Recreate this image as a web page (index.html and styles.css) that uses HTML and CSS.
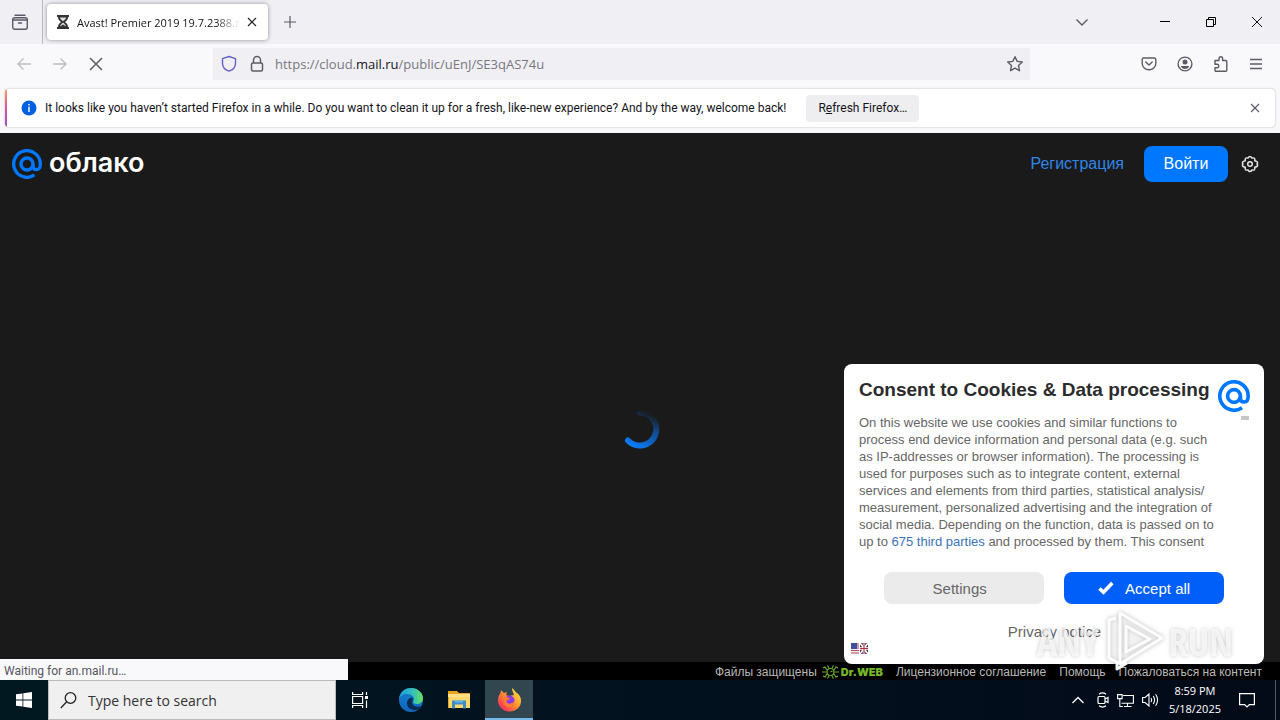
FILE: index.html
```html
<!DOCTYPE html>
<html lang="en">
<head>
<meta charset="utf-8">
<title>Avast! Premier 2019 19.7.2388.zip</title>
<link rel="stylesheet" href="styles.css">
</head>
<body>
<svg class="defs" aria-hidden="true">
  <symbol id="at" viewBox="0 0 32 32">
    <g fill="none" stroke="#07f" stroke-width="3.6">
      <circle cx="16" cy="16" r="6.4"/>
      <path d="M22.4 16v2.2c0 2.3 1.500 3.800 3.700 3.800s4.100-1.800 4.100-6A14.200 14.200 0 1 0 24 27.700"/>
    </g>
  </symbol>
</svg>

<header class="tabs">
  <button class="icon-btn recent" aria-label="Recent browsing">
    <svg width="18" height="18" viewBox="0 0 18 18" fill="none" stroke="#5b5b66" stroke-width="1.4" stroke-linecap="round"><path d="M4 2.200h10"/><rect x="1.700" y="4.700" width="14.600" height="11.600" rx="2"/><path d="M2 7h14M7.500 10h3"/></svg>
  </button>
  <div class="tab">
    <svg width="14" height="16" viewBox="0 0 14 16"><path d="M1 1h12v2h-1c0 3-2 4-3 5 1 1 3 2 3 5h1v2H1v-2h1c0-3 2-4 3-5-1-1-3-2-3-5H1z" fill="#333"/><path d="M4 3.500h6c0 2-2 3-3 3.700C6 6.500 4 5.500 4 3.500zM4 12.500c0-1.500 2-3 3-4 1 1 3 2.500 3 4L7 10.500z" fill="#ddd"/></svg>
    <span class="tab-title">Avast! Premier 2019 19.7.2388.zip</span>
    <button class="icon-btn" aria-label="Close tab"><svg width="10" height="10" viewBox="0 0 10 10" stroke="#222" stroke-width="1.200"><path d="M1 1l8 8M9 1L1 9"/></svg></button>
  </div>
  <button class="icon-btn new-tab" aria-label="New tab"><svg width="12" height="12" viewBox="0 0 12 12" stroke="#5b5b66" stroke-width="1.200"><path d="M6 0v12M0 6h12"/></svg></button>
  <div class="window-controls">
    <button class="icon-btn all-tabs" aria-label="List all tabs"><svg width="14" height="14" viewBox="0 0 14 14" fill="none" stroke="#5b5b66" stroke-width="1.400"><path d="M1.500 4.500L7 10l5.500-5.500"/></svg></button>
    <button class="icon-btn" aria-label="Minimize"><svg width="10" height="10" viewBox="0 0 10 10" stroke="#000"><path d="M0 4.500h10"/></svg></button>
    <button class="icon-btn" aria-label="Restore"><svg width="10" height="10" viewBox="0 0 10 10" fill="none" stroke="#000"><path d="M.5 2.500h7v7h-7zM2.500 2.500v-2h7v7h-2"/></svg></button>
    <button class="icon-btn" aria-label="Close"><svg width="10" height="10" viewBox="0 0 10 10" stroke="#111"><path d="M0 0l10 10M10 0L0 10"/></svg></button>
  </div>
</header>

<nav class="toolbar">
  <div class="nav-buttons">
    <button class="icon-btn" aria-label="Back" disabled><svg width="16" height="16" viewBox="0 0 16 16" fill="none" stroke="#bdbdc2" stroke-width="1.400"><path d="M15 8H2M7.500 2.500L2 8l5.500 5.500"/></svg></button>
    <button class="icon-btn" aria-label="Forward" disabled><svg width="16" height="16" viewBox="0 0 16 16" fill="none" stroke="#bdbdc2" stroke-width="1.400"><path d="M1 8h13M8.500 2.500L14 8l-5.500 5.500"/></svg></button>
    <button class="icon-btn" aria-label="Stop"><svg width="16" height="16" viewBox="0 0 16 16" stroke="#5b5b66" stroke-width="1.500"><path d="M2 2l12 12M14 2L2 14"/></svg></button>
  </div>
  <div class="urlbar">
    <svg width="16" height="18" viewBox="0 0 16 18" fill="none" stroke="#6a5fc9" stroke-width="1.400"><path d="M8 1.500L1.500 3.700v4.500c0 4 3 6.800 6.500 8 3.500-1.200 6.500-4 6.500-8V3.700z" stroke-linejoin="round"/></svg>
    <svg width="14" height="18" viewBox="0 0 14 18" fill="none" stroke="#5b5b66" stroke-width="1.500"><rect x="1.500" y="8" width="11" height="8" rx="1.500"/><path d="M3.500 8V5a3.500 3.500 0 0 1 7 0v3"/></svg>
    <span class="url" role="textbox" aria-label="Address">https://cloud.<b>mail.ru</b>/public/uEnJ/SE3qAS74u</span>
    <button class="icon-btn" aria-label="Bookmark this page"><svg width="18" height="18" viewBox="0 0 18 18" fill="none" stroke="#5b5b66" stroke-width="1.400" stroke-linejoin="round"><path d="M9 1.700l2.200 4.700 5.100.6-3.800 3.500 1 5.200L9 13.200l-4.500 2.500 1-5.200L1.700 7l5.100-.6z"/></svg></button>
  </div>
  <div class="tools">
    <button class="icon-btn" aria-label="Save to Pocket"><svg width="16" height="16" viewBox="0 0 16 16" fill="none" stroke="#5b5b66" stroke-width="1.400" stroke-linecap="round" stroke-linejoin="round"><path d="M2.500 2h11a1.300 1.300 0 0 1 1.300 1.300V7.500a6.800 6.300 0 0 1-13.600 0V3.300A1.300 1.300 0 0 1 2.500 2zM4.800 6L8 9l3.200-3"/></svg></button>
    <button class="icon-btn" aria-label="Account"><svg width="16" height="16" viewBox="0 0 16 16"><circle cx="8" cy="8" r="6.900" fill="none" stroke="#5b5b66" stroke-width="1.400"/><circle cx="8" cy="6" r="2.500" fill="#5b5b66"/><path d="M3.800 10h8.400c-.5 1.900-2.100 3-4.200 3s-3.700-1.100-4.200-3z" fill="#5b5b66"/></svg></button>
    <button class="icon-btn" aria-label="Extensions"><svg width="16" height="18" viewBox="0 0 16 18" fill="none" stroke="#5b5b66" stroke-width="1.400" stroke-linejoin="round"><path d="M2 5.500h4V3.500a1.800 1.800 0 0 1 3.600 0v2h3.200a1 1 0 0 1 1 1v8.800a1 1 0 0 1-1 1H3a1 1 0 0 1-1-1v-2.500h2a1.800 1.800 0 0 0 0-3.600H2z"/></svg></button>
    <button class="icon-btn" aria-label="Open menu"><svg width="14" height="14" viewBox="0 0 14 14" stroke="#5b5b66" stroke-width="1.300"><path d="M1 2.500h12M1 7h12M1 11.500h12"/></svg></button>
  </div>
</nav>

<div class="notice-wrap">
  <div class="notice" role="status">
    <svg width="16" height="16" viewBox="0 0 16 16"><circle cx="8" cy="8" r="7.500" fill="#0060df"/><path d="M7.300 4h1.400v1.500H7.300zM7.300 6.800h1.400V12H7.300z" fill="#fff"/></svg>
    <span class="notice-text">It looks like you haven’t started Firefox in a while. Do you want to clean it up for a fresh, like-new experience? And by the way, welcome back!</span>
    <button class="refresh">R<u>e</u>fresh Firefox…</button>
    <button class="icon-btn notice-close" aria-label="Dismiss"><svg width="10" height="10" viewBox="0 0 10 10" stroke="#5b5b66" stroke-width="1.100"><path d="M1 1l8 8M9 1L1 9"/></svg></button>
  </div>
</div>

<div class="page">
  <header class="site-header">
    <a class="logo" href="#"><svg width="30" height="30"><use href="#at"/></svg><span>облако</span></a>
    <a class="register" href="#">Регистрация</a>
    <button class="login">Войти</button>
    <button class="icon-btn" aria-label="Настройки"><svg width="18" height="18" viewBox="0 0 18 18" fill="none" stroke="#e6e6e6" stroke-width="1.500" stroke-linejoin="round"><path d="M7 3Q9-.2 11 3q3.500-.7 2.700 2.700Q18 7 16 9q2 2.300-2.300 3.300.8 3.400-2.700 2.700-2 3.200-4 0-3.500.7-2.700-2.700Q0 11.300 2 9q-2-2 2.300-3.300Q3.500 2.300 7 3z"/><circle cx="9" cy="9" r="2.300"/></svg></button>
  </header>
  <main class="loading">
    <svg width="44" height="44" viewBox="0 0 44 44"><defs><linearGradient id="fade" x1=".6" y1="0" x2=".2" y2="1"><stop offset="0" stop-color="#0c62c8" stop-opacity=".05"/><stop offset=".4" stop-color="#0c62c8" stop-opacity=".7"/><stop offset="1" stop-color="#0c7af5"/></linearGradient></defs><path d="M22 5.500a16.500 16.500 0 1 1-12 28" fill="none" stroke="url(#fade)" stroke-width="6" stroke-linecap="round"/></svg>
  </main>
  <footer class="site-footer">
    <span class="protected">Файлы защищены
      <svg width="17" height="14" viewBox="0 0 17 14" fill="none" stroke="#6bae2c" stroke-width="1.200"><circle cx="8.500" cy="7" r="3.500"/><path d="M8.500 7l2-1M5 5L3 2 1 3M4.500 7H0M5 9l-2 3-2-1M12 5l2-3 2 1M12.500 7H17M12 9l2 3 2-1M7 3L5.500.5M10 3l1.500-2.500M7 11l-1.500 2.500M10 11l1.500 2.500"/></svg>
      <b>Dr.WEB</b></span>
    <a href="#">Лицензионное соглашение</a>
    <a href="#">Помощь</a>
    <a href="#">Пожаловаться на контент</a>
  </footer>

  <section class="consent" role="dialog" aria-labelledby="consent-title">
    <div class="consent-head">
      <h1 id="consent-title">Consent to Cookies &amp; Data processing</h1>
      <svg width="32" height="32"><use href="#at"/></svg>
    </div>
    <div class="consent-body">
      <p>On this website we use cookies and similar functions to<br>process end device information and personal data (e.g. such<br>as IP-addresses or browser information). The processing is<br>used for purposes such as to integrate content, external<br>services and elements from third parties, statistical analysis/<br>measurement, personalized advertising and the integration of<br>social media. Depending on the function, data is passed on to<br>up to <a href="#">675 third parties</a> and processed by them. This consent</p>
      <span class="scroll-thumb"></span>
    </div>
    <div class="consent-actions">
      <button class="settings">Settings</button>
      <button class="accept"><svg width="16" height="14" viewBox="0 0 16 14" fill="none" stroke="#fff" stroke-width="3.600"><path d="M1.500 7.500L5.500 11.300 14.300 2"/></svg>Accept all</button>
    </div>
    <a class="privacy" href="#">Privacy notice</a>
    <button class="icon-btn language" aria-label="Language"><svg width="17" height="11" viewBox="0 0 17 11"><path d="M0 0h8v11H0z" fill="#eee"/><path d="M0 0h6v6H0z" fill="#3c4f9c"/><path d="M6 1h2M6 3h2M6 5h2M0 7.500h8M0 10h8" stroke="#b44a5c" stroke-width="1.200"/><path d="M9 0h8v11H9z" fill="#35335f"/><path d="M9 0l8 11M17 0L9 11" stroke="#fff" stroke-width="1.500"/><path d="M13 0v11M9 5.500h8" stroke="#fff" stroke-width="2.500"/><path d="M13 0v11M9 5.500h8" stroke="#b93045" stroke-width="1.200"/></svg></button>
  </section>

  <div class="watermark"><span>ANY</span><svg width="60" height="62" viewBox="0 0 60 62" fill="rgba(255,255,255,.2)" stroke="rgba(255,255,255,.95)" stroke-width="3" stroke-linejoin="round"><path d="M16 3l42 25-42 26zM12 8L5 10v38l8 4v7l10-6M22 16l24 13-24 13z"/></svg><span>RUN</span></div>
  <div class="status">Waiting for an.mail.ru…</div>
</div>

<footer class="taskbar">
  <button class="task start" aria-label="Start"><svg width="16" height="16" viewBox="0 0 16 16" fill="#fff"><path d="M0 2.300L6.500 1.400v6.200H0zM7.300 1.300L16 0v7.600H7.300zM0 8.400h6.500v6.200L0 13.700zM7.300 8.400H16V16l-8.700-1.300z"/></svg></button>
  <label class="search"><svg width="17" height="17" viewBox="0 0 17 17" fill="none" stroke="#222" stroke-width="1.300"><circle cx="10.500" cy="6" r="5.300"/><path d="M6.700 9.800L.8 16"/></svg><input type="text" placeholder="Type here to search" aria-label="Search"></label>
  <button class="task view" aria-label="Task view"><svg width="16" height="16" viewBox="0 0 16 16" fill="none" stroke="#fff" stroke-width="1.200"><path d="M.6 0v2.500h10V0M.6 16v-2.500h10V16M.6 4.500h10v7H.6zM14.500 0v3M14.500 8.500V16"/><path d="M13 4h3v3h-3z" fill="#fff" stroke="none"/></svg></button>
  <button class="task edge" aria-label="Microsoft Edge"><svg width="26" height="26" viewBox="0 0 26 26"><defs><linearGradient id="e1" x1="0" x2="1"><stop stop-color="#1b9de2"/><stop offset=".6" stop-color="#35c1b5"/><stop offset="1" stop-color="#6ae05a"/></linearGradient><linearGradient id="e2" y1="0" y2="1" x2="0"><stop stop-color="#1480cf"/><stop offset="1" stop-color="#1167bd"/></linearGradient></defs><circle cx="13" cy="13" r="12" fill="url(#e2)"/><path d="M1 12C2 4 8 1 13 1c7 0 12 5 12 10 0 4-3 6-6 6-2.500 0-4-1-4-2 0-.7 1-1 1-3 0-2.500-3-5-7-5-4 0-7 2-8 5z" fill="url(#e1)"/><path d="M15 11c-2-1-6 1-6 5 0 5 4 7 8 7 2.500 0 5-1.500 6-4-5 2-10-1-8.500-5z" fill="#0b2b55"/></svg></button>
  <button class="task" aria-label="File Explorer"><svg width="22" height="20" viewBox="0 0 22 20"><path d="M0 1h9l2 2h11v15H0z" fill="#e9a51f"/><path d="M1 4h21v14H1z" fill="#ffd86b"/><path d="M0 4h22v3H0z" fill="#ffe08a"/><path d="M4 18.500v-8h14v8h-3v-4H7v4z" fill="#3e8ec4"/><path d="M7 10.500h8v2H7z" fill="#65b8e8"/></svg></button>
  <button class="task active" aria-label="Firefox"><svg width="25" height="25" viewBox="0 0 25 25"><defs><linearGradient id="f1" x1="1" x2="0" y1="0" y2="1"><stop stop-color="#fff04a"/><stop offset=".45" stop-color="#ff9a2d"/><stop offset=".8" stop-color="#ff3f52"/><stop offset="1" stop-color="#e7298a"/></linearGradient></defs><path d="M15 1c3 2 3 4 5 5 3 2 4 5 4 8 0 6-5 10.500-11.500 10.500S1 19.500 1 13.500C1 10 2 8 3.500 6L4 3l3 3 3-1-1 3 3 1 5-1c-1-3-2-4-2-7z" fill="url(#f1)"/><circle cx="12.500" cy="13.500" r="5" fill="#8a3be2"/><path d="M7 10c3-1 4 1 6 1-1 2-3 2-3.500 3 0 3 5 4 7.500 0-.5 5-3 6-5 6-4 0-6-4-5-10z" fill="#ff7b32"/></svg></button>
  <div class="tray">
    <svg class="chevron" width="12" height="12" viewBox="0 0 12 12" fill="none" stroke="#fff" stroke-width="1.300"><path d="M.5 9L6 3.500 11.500 9"/></svg>
    <svg width="12" height="16" viewBox="0 0 12 16" fill="none" stroke="#fff" stroke-width="1.200"><rect x="1" y="4.500" width="7" height="7" rx="1"/><path d="M8 7l3-1.500v5L8 9M2 2.200Q5.500-.3 9 2.200M2 13.800q3.500 2.500 7 0"/></svg>
    <svg width="17" height="15" viewBox="0 0 17 15" fill="none" stroke="#fff" stroke-width="1.100"><path d="M6 2.500h10.400v7.800H4.500M10.500 10.500v3M7 13.500h7.500M.6 1.600h4.500v4H.6zM2.800 5.600v7.900h3"/></svg>
    <svg width="17" height="16" viewBox="0 0 17 16" fill="none" stroke="#fff" stroke-width="1.100"><path d="M.6 5.500h2.500L7 2v12L3.100 10.500H.6zM9 6q1.200 2 0 4M11.300 4q2.500 4 0 8M13.600 2.300q4 5.700 0 11.400"/></svg>
    <time class="clock">8:59 PM<br>5/18/2025</time>
    <svg class="action-center" width="16" height="17" viewBox="0 0 16 17" fill="none" stroke="#fff" stroke-width="1.200"><path d="M.6 1.600h14.800v11h-5L8 15l-2.400-2.400h-5z"/></svg>
  </div>
</footer>
</body>
</html>
```
FILE: styles.css
```css
* { box-sizing: border-box; }
body {
  margin: 0;
  min-height: 100vh;
  display: flex;
  flex-direction: column;
  background: #f9f9fb;
  font-family: "Open Sans", "Noto Sans", sans-serif;
  font-size: 12px;
  color: #15141a;
}
svg { flex: none; display: block; }
button, input { font: inherit; color: inherit; }
button { border: 0; padding: 0; background: none; }
a { text-decoration: none; }
.defs { position: absolute; width: 0; height: 0; }
.icon-btn { display: inline-flex; align-items: center; justify-content: center; flex: none; }

.tabs { display: flex; align-items: center; height: 44px; background: #f0eff4; }
.recent { width: 43px; height: 44px; padding-right: 2px; border-right: 1px solid #b9b9c0; }
.tab {
  display: flex;
  align-items: center;
  gap: 7px;
  width: 221px;
  height: 36px;
  margin-left: 4px;
  padding: 0 11px 0 9px;
  border-radius: 4px;
  background: #fff;
  box-shadow: 0 0 4px rgba(0, 0, 0, .4);
  font-size: 11px;
}
.tab-title {
  flex: 1;
  min-width: 0;
  overflow: hidden;
  white-space: nowrap;
  -webkit-mask-image: linear-gradient(to right, #000 85%, transparent);
  mask-image: linear-gradient(to right, #000 85%, transparent);
}
.new-tab { margin-left: 16px; }
.window-controls { display: flex; align-items: center; margin-left: auto; padding-right: 18px; gap: 36px; }
.all-tabs { margin-right: 35px; }

.toolbar { display: flex; align-items: center; height: 40px; padding: 0 17px 0 16px; }
.nav-buttons { display: flex; gap: 20px; width: 197px; }
.urlbar {
  display: flex;
  align-items: center;
  gap: 13px;
  flex: 1;
  max-width: 817px;
  height: 32px;
  padding: 0 6px 0 8px;
  background: #f0f0f4;
}
.url { flex: 1; margin-left: -2px; font-size: 13px; color: #77777f; }
.url b { font-weight: 400; color: #15141a; }
.tools { display: flex; align-items: center; gap: 20px; margin-left: auto; }

.notice-wrap { padding: 5px 5px 6px; }
.notice {
  display: flex;
  align-items: center;
  height: 38px;
  padding: 0 15px 0 16px;
  border-radius: 4px;
  background: linear-gradient(#ff9a5c, #e0529c, #8f4fc4) left / 2px 100% no-repeat, #fff;
  box-shadow: 0 0 2px rgba(0, 0, 0, .3);
  font-family: Roboto, sans-serif;
}
.notice-text { margin-left: 8px; white-space: nowrap; }
.refresh { height: 27px; margin-left: 20px; padding: 0 12px; border-radius: 4px; background: #eeeef1; white-space: nowrap; }
.notice-close { margin-left: auto; }

.page { position: relative; flex: 1; display: flex; flex-direction: column; background: #1a1a1a; font-family: "Liberation Sans", Arial, sans-serif; }
.site-header { display: flex; align-items: center; height: 62px; padding: 0 21px 0 12px; }
.logo { display: flex; align-items: center; gap: 7px; margin-right: auto; color: #fff; font: 600 27px/30px Inter, sans-serif; }
.logo span { padding-bottom: 2px; }
.logo svg, .consent-head svg { overflow: visible; }
.register { margin-right: 20px; font-size: 16px; color: #2f86e8; }
.login { width: 84px; height: 36px; margin-right: 13px; border-radius: 8px; background: #07f; color: #fff; font-size: 16px; }
.loading { flex: 1; display: flex; align-items: center; justify-content: center; }
.site-footer {
  display: flex;
  align-items: center;
  justify-content: flex-end;
  gap: 13px;
  height: 18px;
  padding: 2px 18px 0 0;
  background: #000;
  color: #b8b8b8;
  font-size: 12px;
  white-space: nowrap;
}
.site-footer a { color: inherit; }
.protected { display: flex; align-items: center; gap: 5px; }
.protected b { margin-left: -3px; color: #76b82a; font: 900 11px/14px Inter, sans-serif; }

.consent {
  position: absolute;
  right: 16px;
  bottom: 16px;
  width: 420px;
  padding: 13px 14px 23px 15px;
  border-radius: 8px;
  background: #fff;
}
.consent-head { display: flex; justify-content: space-between; height: 37px; white-space: nowrap; }
.consent-head h1 { margin: 0; font-size: 19px; line-height: 26px; color: #2b2b2d; }
.consent-head svg { margin-top: 3px; }
.consent-body { display: flex; justify-content: space-between; height: 138px; overflow: hidden; }
.consent-body p { margin: 0; font-size: 13px; line-height: 17px; color: #666; white-space: nowrap; }
.consent-body a { color: #3a74b8; }
.scroll-thumb { width: 8px; height: 4px; margin: 2px 1px; background: #c6c6c6; }
.consent-actions { display: flex; gap: 20px; margin-top: 20px; padding: 0 26px 0 25px; }
.consent-actions button { flex: 1 1 50%; height: 32px; border-radius: 8px; font-size: 15px; }
.consent-actions .settings { padding-right: 9px; background: #ebebeb; color: #666; }
.consent-actions .accept { display: flex; align-items: center; justify-content: center; gap: 11px; background: #005ff9; color: #fff; }
.privacy { display: block; margin-top: 18px; text-align: center; font-size: 15px; line-height: 19px; color: #666; }
.language { position: absolute; left: 7px; bottom: 10px; }

.watermark {
  position: absolute;
  right: 47px;
  bottom: 8px;
  display: flex;
  align-items: center;
  gap: 5px;
  color: rgba(255, 255, 255, .7);
  font: 700 38px/40px "Open Sans Condensed", "Liberation Sans Narrow", sans-serif;
  filter: drop-shadow(0 0 2px rgba(0, 0, 0, .3));
  pointer-events: none;
}
.status {
  position: absolute;
  left: 0;
  bottom: 0;
  width: 348px;
  height: 21px;
  padding: 0 4px;
  background: #f9f9fb;
  color: #55555c;
  font: 12px/24px Roboto, sans-serif;
}

.taskbar { display: flex; height: 40px; background: linear-gradient(90deg, #021820, #02101e 60%, #030a18); color: #fff; }
.task { display: flex; align-items: center; justify-content: center; width: 48px; }
.edge { margin-left: 3px; }
.task.active { margin-left: 2px; background: #324650; border-bottom: 2px solid #76b9ed; }
.search { display: flex; align-items: center; gap: 11px; width: 288px; padding: 0 11px; background: #f0f0f0; border: 1px solid #bbb; }
.search input { flex: 1; min-width: 0; padding: 0; border: 0; outline: 0; background: none; font-size: 14px; }
.search input::placeholder { color: #333; opacity: 1; }
.tray { display: flex; align-items: center; gap: 8px; margin-left: auto; margin-right: 4px; padding-right: 20px; border-right: 1px solid #556; }
.chevron { margin-right: 5px; }
.clock { margin-left: 2px; font-size: 11px; line-height: 18px; text-align: center; }
.action-center { margin-left: 10px; }
```
